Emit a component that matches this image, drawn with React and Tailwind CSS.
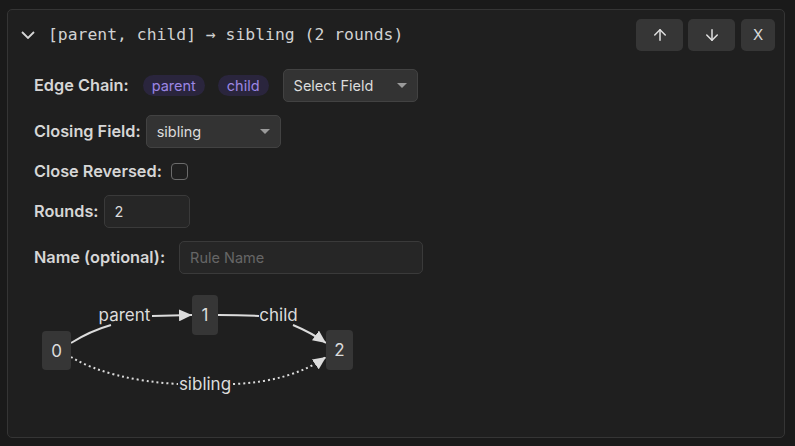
import React, { useState } from "react";
import { ArrowUp, ArrowDown } from "lucide-react";

function Select({ value, width }) {
  return (
    <div
      className={`flex h-[33px] items-center justify-between rounded-[5px] border border-[#424242] bg-[#333333] pl-[10px] pr-[10px] text-[14.5px] text-[#dcdcdc] ${width}`}
    >
      <span>{value}</span>
      <svg width="10" height="6" viewBox="0 0 10 6">
        <path d="M0 0 L10 0 L5 5 Z" fill="#9a9a9a" />
      </svg>
    </div>
  );
}

function Pill({ children }) {
  return (
    <span className="rounded-full bg-[#2a253d] px-[9px] py-[1px] text-[14.5px] leading-[19px] text-[#9c86e4]">
      {children}
    </span>
  );
}

function Graph() {
  return (
    <svg width="330" height="120" viewBox="34 287 330 120">
      <defs>
        <marker
          id="head"
          viewBox="0 0 13 12"
          refX="13"
          refY="6"
          markerWidth="13"
          markerHeight="12"
          markerUnits="userSpaceOnUse"
          orient="auto"
        >
          <path d="M0 0 L13 6 L0 12 Z" fill="#dcdcdc" />
        </marker>
      </defs>

      {/* parent edge */}
      <path d="M71 343 Q90 331 111 325" stroke="#dcdcdc" strokeWidth="2" fill="none" />
      <path d="M152 316 L192 315" stroke="#dcdcdc" strokeWidth="2" fill="none" markerEnd="url(#head)" />

      {/* child edge */}
      <path d="M218 315 Q240 315 259 316" stroke="#dcdcdc" strokeWidth="2" fill="none" />
      <path d="M293 325 Q312 333 326 343" stroke="#dcdcdc" strokeWidth="2" fill="none" markerEnd="url(#head)" />

      {/* sibling edge */}
      <path
        d="M71 357 Q110 380 178 384"
        stroke="#dcdcdc"
        strokeWidth="2"
        strokeDasharray="2 3"
        fill="none"
      />
      <path
        d="M233 384 Q290 382 326 357"
        stroke="#dcdcdc"
        strokeWidth="2"
        strokeDasharray="2 3"
        fill="none"
        markerEnd="url(#head)"
      />

      <g fontFamily="Inter, sans-serif" fontSize="17" fill="#dcdcdc" textAnchor="middle">
        <text x="124.5" y="321">parent</text>
        <text x="278.5" y="321">child</text>
        <text x="205" y="390">sibling</text>
      </g>

      <g fontFamily="Inter, sans-serif" fontSize="17" fill="#dcdcdc" textAnchor="middle">
        <rect x="42" y="331" width="29" height="39" rx="4" fill="#363636" />
        <text x="56.5" y="356.5">0</text>
        <rect x="192" y="295" width="26" height="40" rx="4" fill="#363636" />
        <text x="205" y="321">1</text>
        <rect x="326" y="330" width="27" height="40" rx="4" fill="#363636" />
        <text x="339.5" y="356">2</text>
      </g>
    </svg>
  );
}

export default function App() {
  const [reversed, setReversed] = useState(false);

  return (
    <div
      className="min-h-screen bg-[#1a1a1a] pl-[7px] pr-[10px] pt-[9px]"
      style={{ fontFamily: "Inter, 'Noto Sans', sans-serif" }}
    >
      <div className="h-[429px] rounded-[5px] border border-[#353535] bg-[#1f1f1f]">
        <div className="flex items-center justify-between pl-[13px] pr-[9px] pt-[9px]">
          <div className="flex items-center">
            <svg width="14" height="8" viewBox="0 0 14 8">
              <path d="M1 1 L7 7 L13 1" stroke="#d6d6d6" strokeWidth="1.8" fill="none" />
            </svg>
            <span
              className="ml-[13px] text-[16.4px] text-[#d2d2d2]"
              style={{ fontFamily: "'DejaVu Sans Mono', monospace" }}
            >
              [parent, child] → sibling (2 rounds)
            </span>
          </div>
          <div className="flex gap-[5px]">
            <button className="flex h-[32px] w-[47px] items-center justify-center rounded-[5px] bg-[#363636] text-[#e0e0e0]">
              <ArrowUp size={18} strokeWidth={2} />
            </button>
            <button className="flex h-[32px] w-[47px] items-center justify-center rounded-[5px] bg-[#363636] text-[#e0e0e0]">
              <ArrowDown size={18} strokeWidth={2} />
            </button>
            <button className="ml-[1px] flex h-[32px] w-[34px] items-center justify-center rounded-[5px] bg-[#363636] text-[15px] text-[#d8d8d8]">
              X
            </button>
          </div>
        </div>

        <div className="flex flex-col gap-[13px] pl-[26px] pt-[18px]">
          <div className="flex items-center">
            <span className="mr-[14px] text-[16.3px] font-semibold text-[#d6d6d6]">Edge Chain:</span>
            <div className="flex items-center gap-[13px]">
              <Pill>parent</Pill>
              <Pill>child</Pill>
            </div>
            <div className="ml-[14px]">
              <Select value="Select Field" width="w-[135px]" />
            </div>
          </div>

          <div className="flex items-center">
            <span className="mr-[5px] text-[16.3px] font-semibold text-[#d6d6d6]">Closing Field:</span>
            <Select value="sibling" width="w-[135px]" />
          </div>

          <div className="flex h-[21px] items-center">
            <span className="mr-[9px] text-[16.3px] font-semibold text-[#d6d6d6]">Close Reversed:</span>
            <button
              onClick={() => setReversed(!reversed)}
              className="h-[17px] w-[17px] rounded-[4px] border-[1.5px] border-[#6b6b6b]"
            />
          </div>

          <div className="flex items-center">
            <span className="mr-[5px] text-[16.3px] font-semibold text-[#d6d6d6]">Rounds:</span>
            <input
              defaultValue="2"
              className="h-[33px] w-[86px] rounded-[5px] border border-[#3a3a3a] bg-[#262626] px-[10px] text-[14.5px] text-[#dcdcdc] outline-none"
            />
          </div>

          <div className="flex items-center">
            <span className="mr-[14px] text-[16.3px] font-semibold text-[#d6d6d6]">Name (optional):</span>
            <input
              placeholder="Rule Name"
              className="h-[33px] w-[244px] rounded-[5px] border border-[#3a3a3a] bg-[#262626] px-[10px] text-[14.5px] text-[#dcdcdc] outline-none placeholder:text-[#666666]"
            />
          </div>

          <Graph />
        </div>
      </div>
    </div>
  );
}
